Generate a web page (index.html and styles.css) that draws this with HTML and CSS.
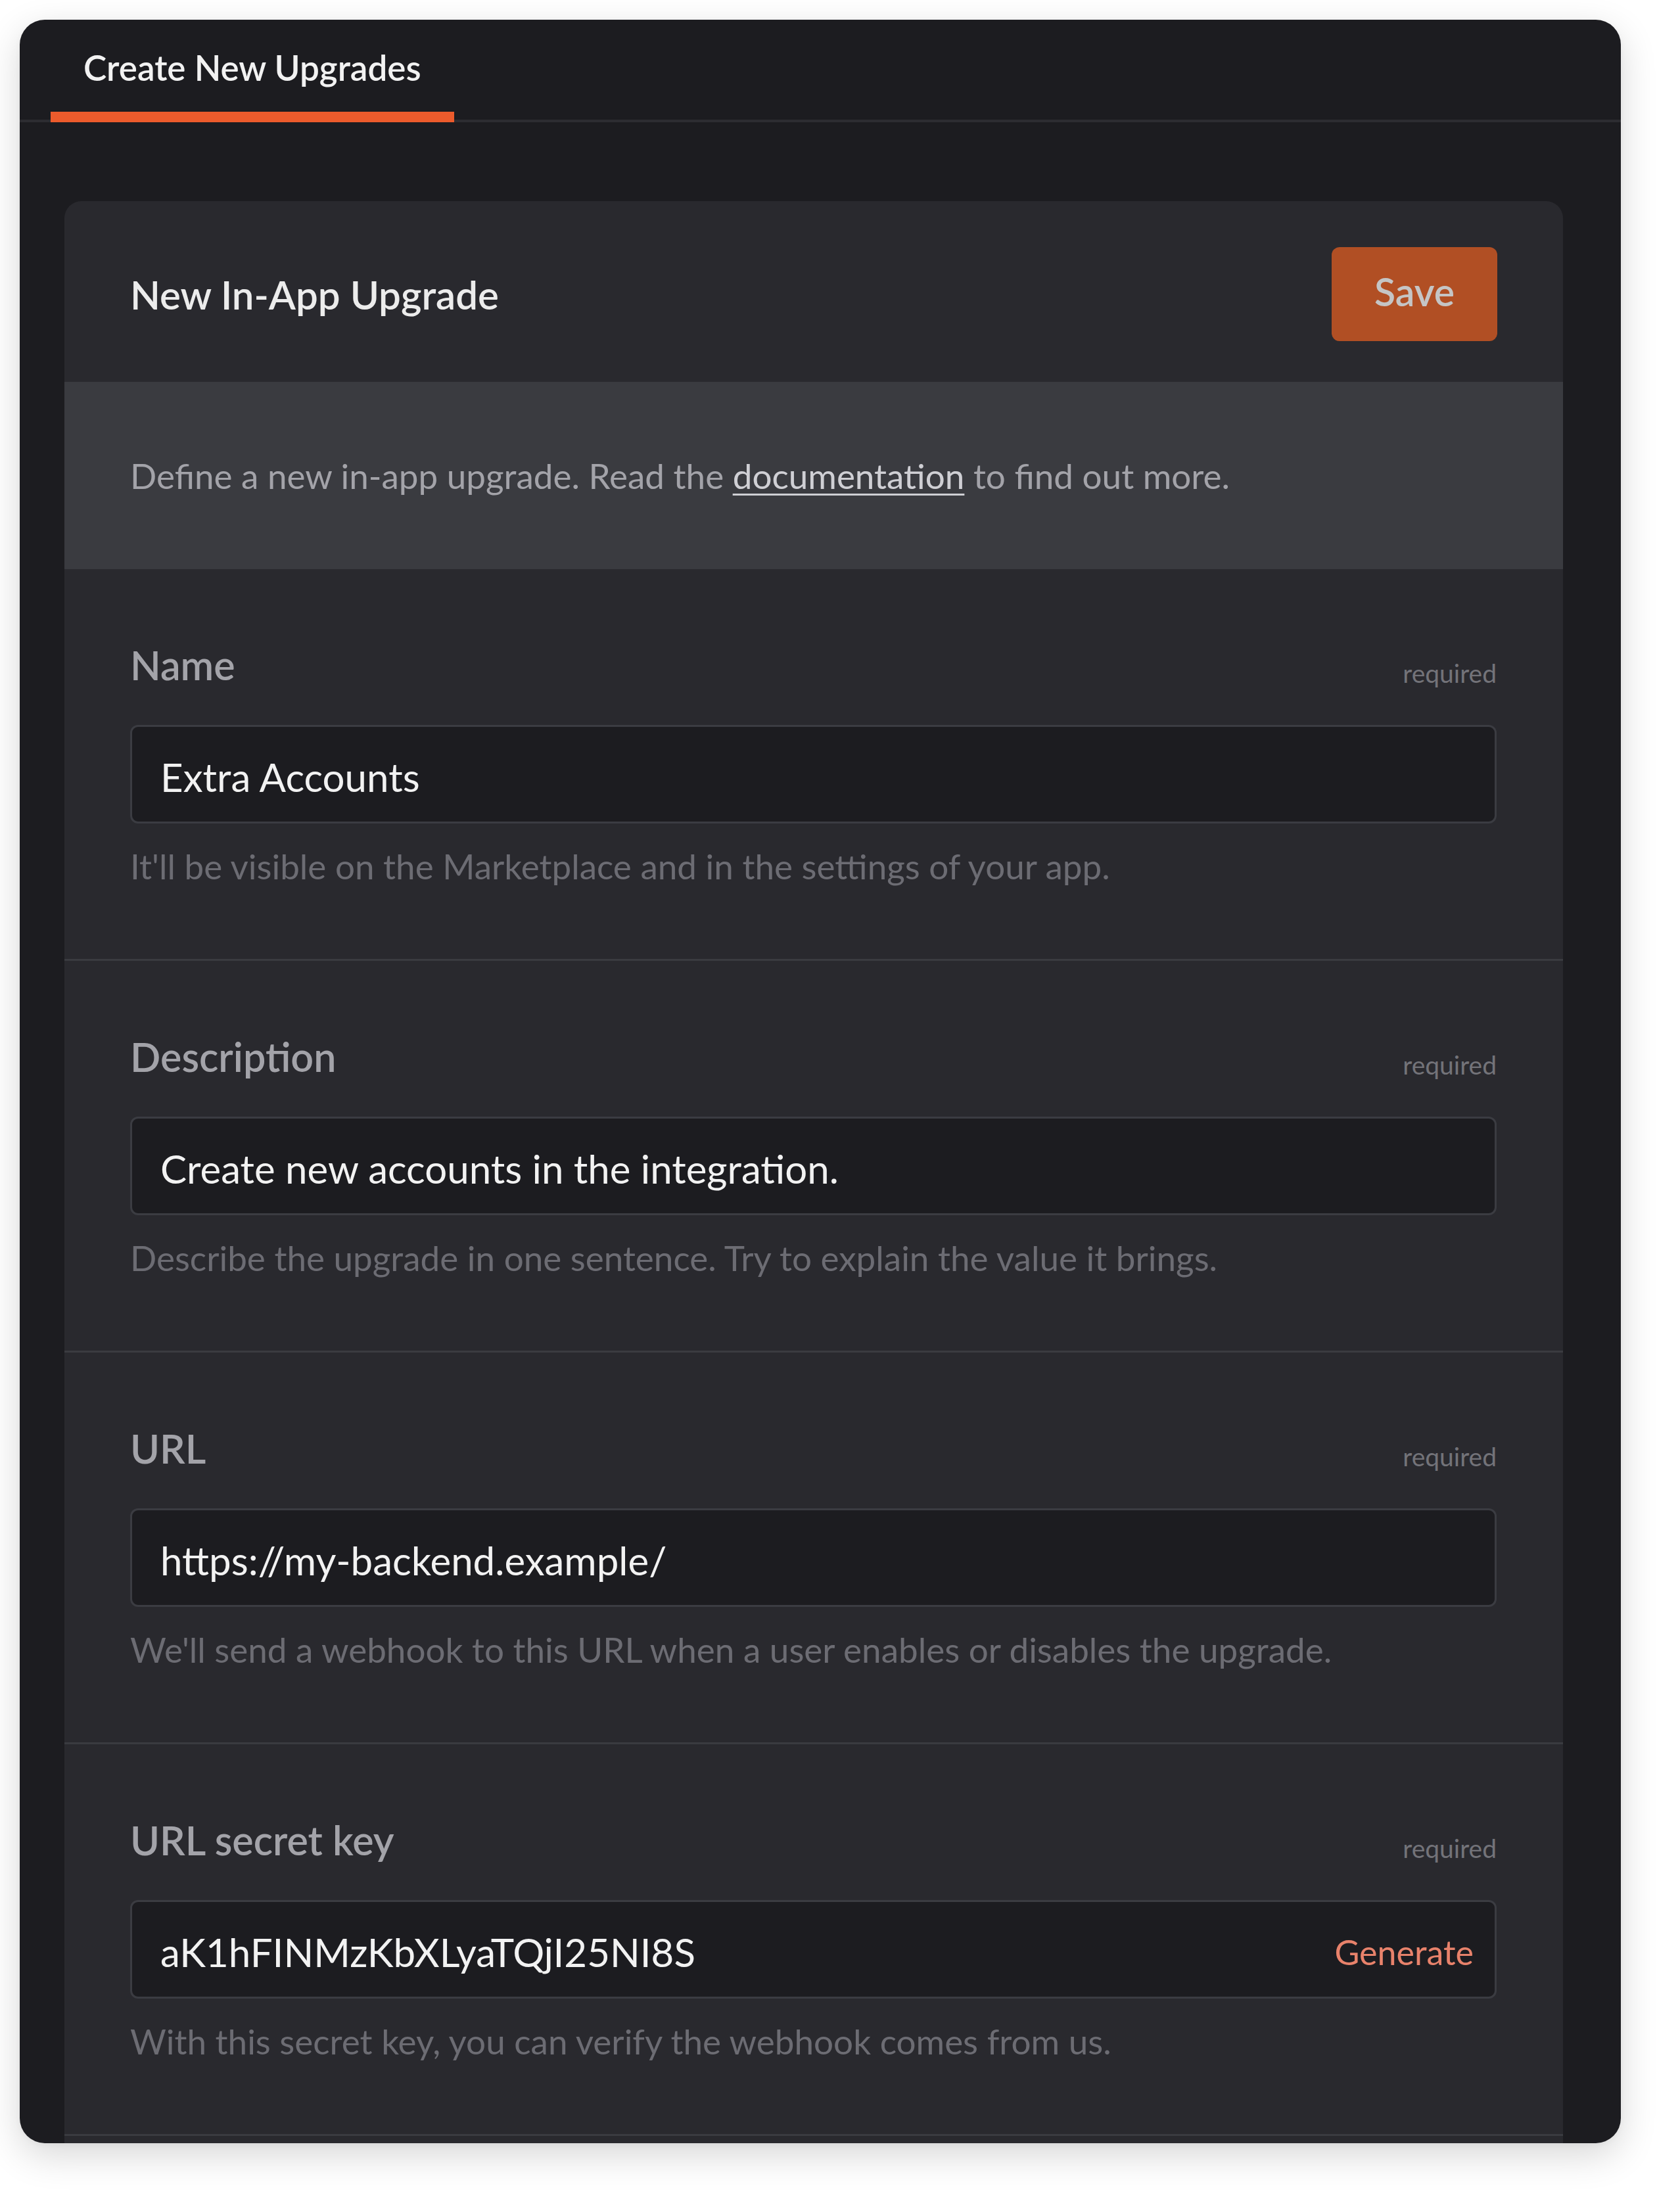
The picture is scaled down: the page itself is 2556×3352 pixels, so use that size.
FILE: index.html
```html
<!DOCTYPE html>
<html lang="en">
<head>
<meta charset="utf-8">
<title>Create New Upgrades</title>
<link rel="stylesheet" href="styles.css">
</head>
<body>
<div class="window">
  <nav class="tabs">
    <div class="tab">Create New Upgrades</div>
  </nav>
  <main class="content">
    <section class="card">
      <header class="card-header">
        <h1 class="card-title">New In-App Upgrade</h1>
        <button class="btn-save">Save</button>
      </header>
      <div class="intro">
        <p>Define a new in-app upgrade. Read the <a href="#" class="link">documentation</a> to find out more.</p>
      </div>

      <div class="field">
        <div class="field-head">
          <label class="field-label">Name</label>
          <span class="field-req">required</span>
        </div>
        <div class="input"><span class="input-text">Extra Accounts</span></div>
        <p class="field-help">It'll be visible on the Marketplace and in the settings of your app.</p>
      </div>

      <div class="field">
        <div class="field-head">
          <label class="field-label">Description</label>
          <span class="field-req">required</span>
        </div>
        <div class="input"><span class="input-text">Create new accounts in the integration.</span></div>
        <p class="field-help">Describe the upgrade in one sentence. Try to explain the value it brings.</p>
      </div>

      <div class="field">
        <div class="field-head">
          <label class="field-label">URL</label>
          <span class="field-req">required</span>
        </div>
        <div class="input"><span class="input-text">https://my-backend.example/</span></div>
        <p class="field-help">We'll send a webhook to this URL when a user enables or disables the upgrade.</p>
      </div>

      <div class="field">
        <div class="field-head">
          <label class="field-label">URL secret key</label>
          <span class="field-req">required</span>
        </div>
        <div class="input"><span class="input-text">aK1hFINMzKbXLyaTQjI25NI8S</span><span class="input-action">Generate</span></div>
        <p class="field-help">With this secret key, you can verify the webhook comes from us.</p>
      </div>

      <div class="field"></div>
    </section>
  </main>
</div>
</body>
</html>
```

FILE: styles.css
```css
* { box-sizing: border-box; }

html, body {
  margin: 0;
  padding: 0;
  background: #ffffff;
}

body {
  padding: 30px 90px 91px 30px;
  font-family: "Source Sans Pro", Lato, "Noto Sans", sans-serif;
}

.window {
  width: 2436px;
  height: 3231px;
  background: #1c1c20;
  border-radius: 38px;
  overflow: hidden;
  box-shadow: 0 18px 56px rgba(0, 0, 0, 0.16), 0 2px 10px rgba(0, 0, 0, 0.04);
}

.tabs {
  display: flex;
  height: 156px;
  padding-left: 47px;
  border-bottom: 4px solid #2c2c31;
}

.tab {
  padding: 46px 50px 41px;
  font-size: 53px;
  line-height: 53px;
  font-weight: 600;
  color: #f2f2f2;
  border-bottom: 16px solid #ec5b2c;
  height: 156px;
}

.content {
  padding: 120px 88px 0 68px;
}

.card {
  background: #29292e;
  border-radius: 26px;
  overflow: hidden;
  min-height: 3000px;
}

.card-header {
  height: 275px;
  padding: 8px 100px 0;
  display: flex;
  align-items: center;
  justify-content: space-between;
}

.card-title {
  margin: 0;
  font-size: 60px;
  font-weight: 600;
  color: #ececec;
  line-height: 1.2;
}

.btn-save {
  width: 252px;
  height: 143px;
  border: none;
  border-radius: 12px;
  background: #b14f24;
  color: #c5c5c5;
  font-family: inherit;
  font-size: 59px;
  font-weight: 600;
  padding: 0 0 8px;
}

.intro {
  height: 285px;
  background: #3a3b40;
  padding: 0 100px;
  display: flex;
  align-items: center;
}

.intro p {
  margin: 0;
  font-size: 53px;
  line-height: 1.2;
  color: #a3a3a9;
}

.link {
  color: #cfcfd4;
  text-decoration: underline;
  text-decoration-thickness: 3px;
  text-underline-offset: 7px;
}

.field {
  padding: 117px 101px 115px 100px;
  border-bottom: 3px solid #3a3b40;
  height: 596px;
}

.field-head {
  display: flex;
  justify-content: space-between;
  align-items: flex-start;
  height: 57px;
}

.field-label {
  font-size: 61px;
  line-height: 57px;
  font-weight: 600;
  color: #a3a3a9;
}

.field-req {
  padding-top: 13px;
  font-size: 39px;
  line-height: 57px;
  color: #737379;
}

.input {
  margin-top: 63px;
  height: 150px;
  border: 3px solid #3b3c42;
  border-radius: 12px;
  background: #1c1c20;
  padding: 47px 32px 0 43px;
  display: flex;
  justify-content: space-between;
}

.input-text {
  font-size: 60px;
  line-height: 58px;
  color: #f2f2f2;
}

.input-action {
  font-size: 52px;
  line-height: 58px;
  color: #e8826b;
}

.field-help {
  margin: 39px 0 0;
  font-size: 53px;
  line-height: 52px;
  color: #6c6c73;
}
```
